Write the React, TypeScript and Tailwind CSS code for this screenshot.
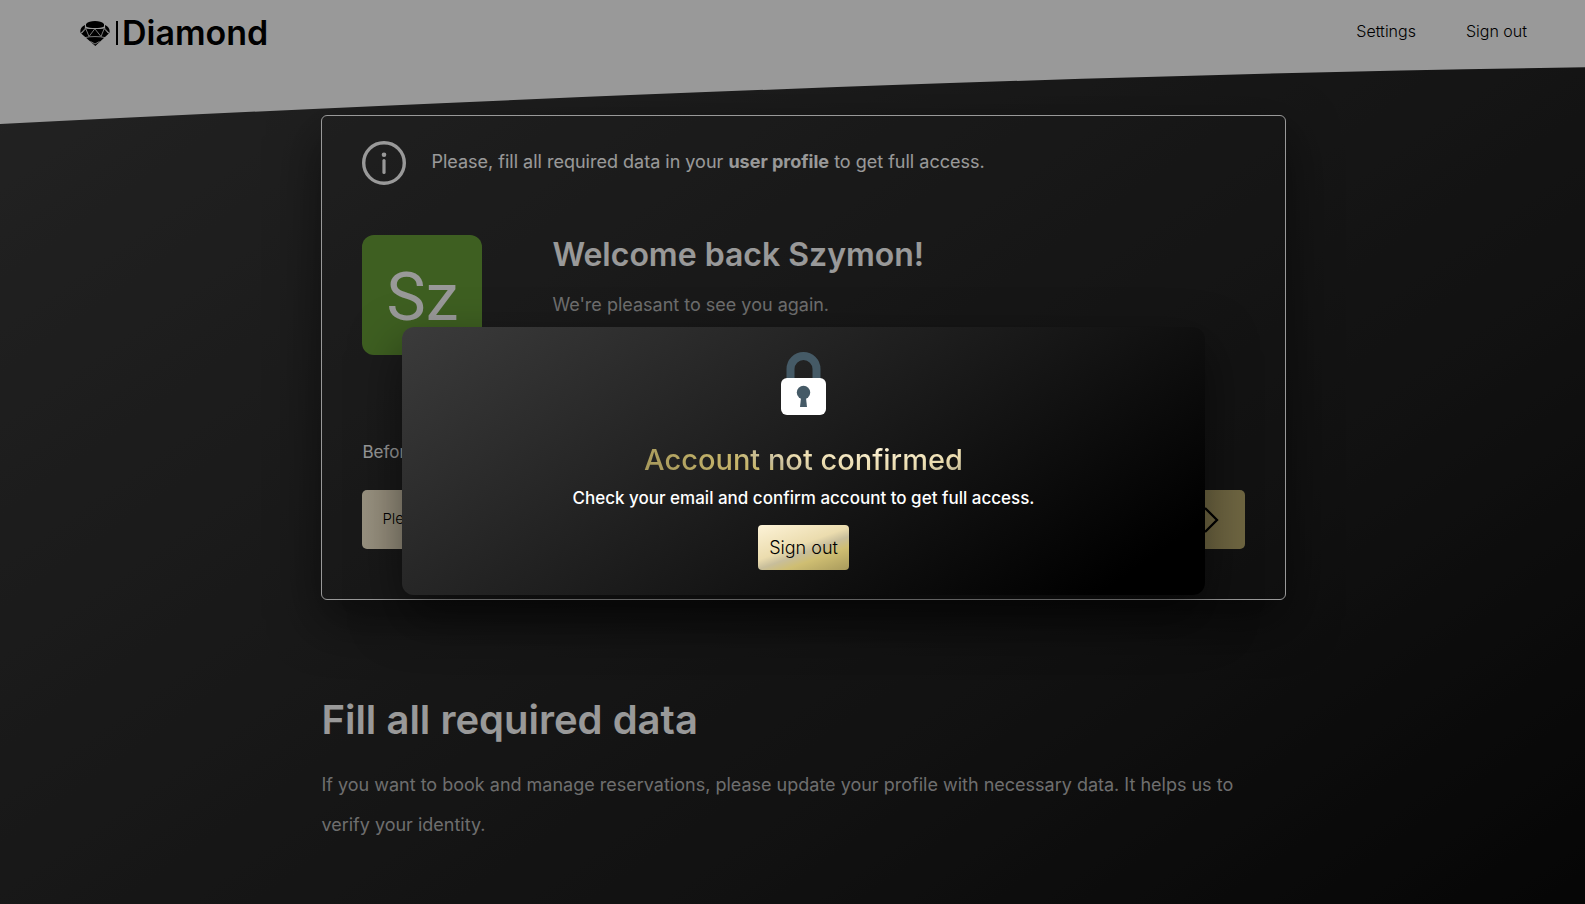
import React from "react";

function DiamondMark() {
  return (
    <svg width="30" height="25" viewBox="0 0 30 25" aria-hidden="true">
      <path d="M6 3C8 .8 11 0 15 0s7 .8 9 3v2.500c-2 1.200-5.500 1.500-9 1.500s-7-.3-9-1.500z" fill="#000" />
      <path d="M5 4 4.800 7.500.6 12C-.2 9 .8 6 5 4zM25 4l.2 3.500 4.200 4.500c.8-3-.2-6-4.400-8z" fill="#000" />
      <path d="M5.500 7.200c3 1.200 16 1.200 19 0l4.300 5.300L15.300 25 1.200 12.500z" fill="#000" />
      <path
        d="M5.600 7.200 9 15.500 14.800 7.800 21 15.500l3.400-8.300M1.800 12.200 5.500 8M28.200 12.200 24.500 8M5 16.600c5-1.400 15-1.400 20 0M10.500 20.500l4.500 2.500 4.500-2.500"
        fill="none"
        stroke="#fff"
        strokeWidth=".8"
      />
    </svg>
  );
}

function InfoIcon() {
  return (
    <svg className="shrink-0" width="44" height="44" viewBox="0 0 44 44" fill="none" aria-hidden="true">
      <circle cx="22" cy="22" r="20.300" stroke="#fff" strokeWidth="3.400" />
      <circle cx="22" cy="13.800" r="2.300" fill="#fff" />
      <path d="M22 19.500v12" stroke="#fff" strokeWidth="3.200" strokeLinecap="round" />
    </svg>
  );
}

function LockIcon() {
  return (
    <svg width="46" height="64" viewBox="0 0 46 64" aria-hidden="true">
      <path d="M9.500 28V17a13 13 0 0 1 26 0V28" fill="none" stroke="#455a66" strokeWidth="8" />
      <rect x="0" y="26" width="45" height="37" rx="6" fill="#fff" />
      <circle cx="22.500" cy="40.500" r="6.700" fill="#455a66" />
      <path d="M20.200 44h4.600l1.200 11h-7z" fill="#455a66" />
    </svg>
  );
}

function Header() {
  return (
    <header className="relative flex h-16 items-center justify-between px-20">
      <svg
        className="absolute inset-x-0 top-0 h-[124px] w-full"
        viewBox="0 0 1607 124"
        preserveAspectRatio="none"
        aria-hidden="true"
      >
        <path d="M0 0H1607V67Q973 75 0 124Z" fill="#fff" />
      </svg>
      <a href="#" className="relative flex items-center gap-1 pt-0.5 text-black">
        <DiamondMark />
        <span className="ml-0.5 h-6 w-0.5 bg-black" />
        <span className="text-[34px] leading-10 font-semibold">Diamond</span>
      </a>
      <nav className="relative flex gap-[50px] pb-0.5 text-[16px] font-light text-black">
        <a href="#settings">Settings</a>
        <a href="#signout">Sign out</a>
      </nav>
    </header>
  );
}

function ProfileCard() {
  return (
    <section className="mt-[51px] rounded-md border border-white px-10 pt-[25px] pb-[50px] shadow-[0_20px_50px_rgba(0,0,0,0.5)]">
      <div className="flex items-center gap-[25px]">
        <InfoIcon />
        <p className="pb-1 text-[18px]">
          Please, fill all required data in your <b className="font-bold">user profile</b> to get full access.
        </p>
      </div>
      <div className="mt-[50px] flex gap-[70px]">
        <div className="flex size-[120px] items-center justify-center rounded-xl bg-[#689f38] pt-1 font-['Roboto',sans-serif] text-[66px] text-white">
          Sz
        </div>
        <div>
          <h1 className="text-[32px] leading-10 font-semibold">Welcome back Szymon!</h1>
          <p className="mt-4 text-[18px] leading-7 text-[#b8b8b8]">We're pleasant to see you again.</p>
        </div>
      </div>
      <p className="mt-[83px] text-[17px] leading-7">Before you start</p>
      <button className="mt-6 flex h-[59px] w-full items-center justify-between rounded-[5px] bg-linear-to-r from-[#fff3d6] via-[#dccb93] to-[#b9aa6d] pr-[26px] pl-5 text-[15px] font-light text-black">
        Please, update your profile
        <svg width="16" height="26" viewBox="0 0 16 26" fill="none" stroke="#000" strokeWidth="2.300" aria-hidden="true">
          <path d="M2 1 14 13 2 25" />
        </svg>
      </button>
    </section>
  );
}

function ConfirmDialog() {
  return (
    <div className="absolute top-0 left-0 -right-[22px] -bottom-[18px] flex items-center justify-center bg-black/40">
      <div
        role="dialog"
        aria-labelledby="dialog-title"
        className="flex w-1/2 flex-col items-center rounded-xl bg-[linear-gradient(145deg,#3b3b3b_0%,#1c1c1c_48%,#000_91%)] py-[25px] shadow-[0_20px_50px_rgba(0,0,0,0.5)]"
      >
        <LockIcon />
        <h2
          id="dialog-title"
          className="mt-6 bg-[radial-gradient(240px_60px_at_73%_15%,#fdf3d8_0%,#ebdcae_38%,#c8be9b_50%,#c8b76c_62%,#a89a5c_100%)] bg-clip-text text-[29px] leading-10 font-medium text-transparent"
        >
          Account not confirmed
        </h2>
        <p className="mt-1 text-[17px] leading-7 font-medium">
          Check your email and confirm account to get full access.
        </p>
        <button className="mt-[13px] h-[45px] w-[91px] rounded bg-[linear-gradient(160deg,#fdf3d8_0%,#ebdcae_45%,#c8be9b_57%,#cfbe72_70%,#a89a5c_100%)] text-[18px] font-light text-black">
          Sign out
        </button>
      </div>
    </div>
  );
}

export default function App() {
  return (
    <div className="relative min-h-screen overflow-hidden bg-[linear-gradient(145deg,#3b3b3b_0%,#1d1d1d_70%,#141414_84%,#0a0a0a_100%)] font-['Inter',sans-serif] text-white">
      <div className="w-[calc(100%+22px)]">
        <Header />
        <main className="mx-auto w-3/5">
          <ProfileCard />
          <h2 className="mt-[94px] text-[40px] leading-[52px] font-semibold">Fill all required data</h2>
          <p className="mt-[19px] pr-5 text-[18px] leading-10 text-[#b8b8b8]">
            If you want to book and manage reservations, please update your profile with necessary data. It helps us to
            verify your identity.
          </p>
        </main>
      </div>
      <ConfirmDialog />
    </div>
  );
}
